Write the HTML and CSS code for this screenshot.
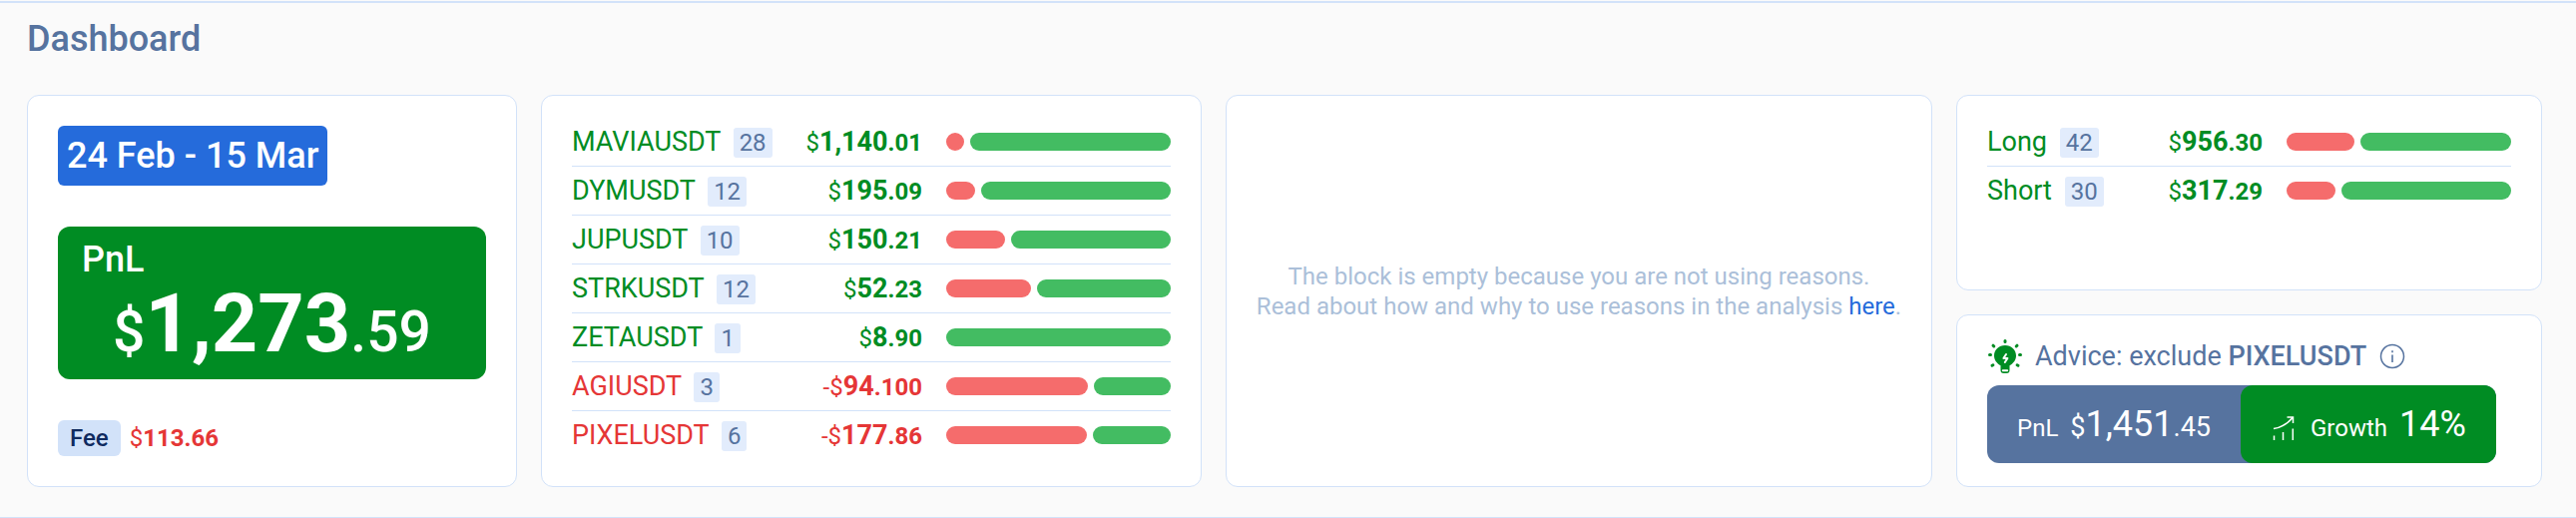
FILE: index.html
```html
<!DOCTYPE html>
<html lang="en">
<head>
    <meta charset="UTF-8">
    <meta name="viewport" content="width=device-width, initial-scale=1.0">
    <title>Dashboard</title>
    <link rel="stylesheet" href="styles.css">
</head>
<body>
<main class="dashboard">
    <h1>Dashboard</h1>
    <div class="cards">
        <section class="card summary">
            <button type="button" class="period">24 Feb - 15 Mar</button>
            <div class="pnl">
                <div class="pnl-label">PnL</div>
                <div class="pnl-value"><span>$</span><strong>1,273</strong><span>.59</span></div>
            </div>
            <div class="fee">
                <span class="fee-label">Fee</span>
                <span class="fee-value">$<b>113.66</b></span>
            </div>
        </section>

        <section class="card list-card">
            <table class="list">
                <tr class="plus">
                    <td class="name">MAVIAUSDT <span class="count">28</span></td>
                    <td class="amount">$<b>1,140</b><b class="cents">.01</b></td>
                    <td class="ratio"><div class="bar"><span class="loss" style="width: 8%"></span><span class="win"></span></div></td>
                </tr>
                <tr class="plus">
                    <td class="name">DYMUSDT <span class="count">12</span></td>
                    <td class="amount">$<b>195</b><b class="cents">.09</b></td>
                    <td class="ratio"><div class="bar"><span class="loss" style="width: 13%"></span><span class="win"></span></div></td>
                </tr>
                <tr class="plus">
                    <td class="name">JUPUSDT <span class="count">10</span></td>
                    <td class="amount">$<b>150</b><b class="cents">.21</b></td>
                    <td class="ratio"><div class="bar"><span class="loss" style="width: 26%"></span><span class="win"></span></div></td>
                </tr>
                <tr class="plus">
                    <td class="name">STRKUSDT <span class="count">12</span></td>
                    <td class="amount">$<b>52</b><b class="cents">.23</b></td>
                    <td class="ratio"><div class="bar"><span class="loss" style="width: 37.8%"></span><span class="win"></span></div></td>
                </tr>
                <tr class="plus">
                    <td class="name">ZETAUSDT <span class="count">1</span></td>
                    <td class="amount">$<b>8</b><b class="cents">.90</b></td>
                    <td class="ratio"><div class="bar"><span class="win"></span></div></td>
                </tr>
                <tr class="minus">
                    <td class="name">AGIUSDT <span class="count">3</span></td>
                    <td class="amount">-$<b>94</b><b class="cents">.100</b></td>
                    <td class="ratio"><div class="bar"><span class="loss" style="width: 63%"></span><span class="win"></span></div></td>
                </tr>
                <tr class="minus">
                    <td class="name">PIXELUSDT <span class="count">6</span></td>
                    <td class="amount">-$<b>177</b><b class="cents">.86</b></td>
                    <td class="ratio"><div class="bar"><span class="loss" style="width: 62.6%"></span><span class="win"></span></div></td>
                </tr>
            </table>
        </section>

        <section class="card empty">
            <p>The block is empty because you are not using reasons.<br>
            Read about how and why to use reasons in the analysis <a href="#">here</a>.</p>
        </section>

        <div class="column">
            <section class="card list-card sides">
                <table class="list">
                    <tr class="plus">
                        <td class="name">Long <span class="count">42</span></td>
                        <td class="amount">$<b>956</b><b class="cents">.30</b></td>
                        <td class="ratio"><div class="bar"><span class="loss" style="width: 30%"></span><span class="win"></span></div></td>
                    </tr>
                    <tr class="plus">
                        <td class="name">Short <span class="count">30</span></td>
                        <td class="amount">$<b>317</b><b class="cents">.29</b></td>
                        <td class="ratio"><div class="bar"><span class="loss" style="width: 21.8%"></span><span class="win"></span></div></td>
                    </tr>
                </table>
            </section>

            <section class="card advice">
                <div class="advice-title">
                    <svg class="bulb" width="36" height="36" viewBox="0 0 36 36" aria-hidden="true">
                        <path stroke="#008c23" stroke-width="3" stroke-linecap="round" d="M18 2.500v1M6 7.200l.8.8M30 7.200l-.8.8M2.500 16.500h1M32.500 16.500h1M5 27.300l.9-.5M31 27.300l-.9-.5"/>
                        <path fill="#008c23" d="M18 7C11.800 7 7 11.600 7 17.500c0 4.300 2.800 7.500 6.500 9.800V32a3 3 0 0 0 3 3h3a3 3 0 0 0 3-3v-4.700C26.200 25 29 21.800 29 17.500 29 11.600 24.200 7 18 7z"/>
                        <path fill="none" stroke="#fff" stroke-width="2" stroke-linecap="round" stroke-linejoin="round" d="M19 16l-2.600 4h4l-2.600 4M15.800 32.300h4.400"/>
                    </svg>
                    <span>Advice: exclude <b>PIXELUSDT</b></span>
                    <button type="button" class="info" aria-label="Info">
                        <svg width="26" height="26" viewBox="0 0 26 26" fill="none" stroke="#56739f">
                            <circle cx="13" cy="13" r="11.500" stroke-width="1.500"/>
                            <path d="M13 11.500v7.500M13 7.300v2" stroke-width="1.600"/>
                        </svg>
                    </button>
                </div>
                <div class="forecast">
                    <div class="forecast-part">
                        <span class="forecast-label">PnL</span>
                        <span class="forecast-value"><small>$</small>1,451<small>.45</small></span>
                    </div>
                    <div class="forecast-part growth">
                        <svg class="growth-icon" width="22" height="26" viewBox="0 0 22 26" fill="none" stroke="#fff" stroke-width="1.500" aria-hidden="true">
                            <path d="M1 13.500C8 12.500 15 8.500 20.300 2.200M14.500 2h6v6M1.500 20.500V25M10.500 17v8M20.300 13.500V25"/>
                        </svg>
                        <span class="forecast-label">Growth</span>
                        <span class="forecast-value">14%</span>
                    </div>
                </div>
            </section>
        </div>
    </div>
</main>
</body>
</html>
```

FILE: styles.css
```css
* {
    box-sizing: border-box;
}
body {
    margin: 0;
    padding-top: 1px;
    background: #fafafa;
    font-family: Roboto, Arial, sans-serif;
    font-size: 24px;
    color: #56739f;
}
button {
    border: none;
    padding: 0;
    background: none;
    font-family: inherit;
    cursor: pointer;
}
.dashboard {
    border-top: 2px solid #d2e2f9;
    border-bottom: 1px solid #d2e2f9;
    padding: 15px 34px 30px 27px;
}
h1 {
    margin: 0 0 35px;
    font-size: 36px;
    line-height: 42px;
    font-weight: 500;
}
.cards {
    display: grid;
    grid-template-columns: 491fr 662fr 708fr 587fr;
    gap: 24px;
}
.card {
    background: #fff;
    border: 1px solid #d2e2f9;
    border-radius: 12px;
    padding: 30px;
}

/* period, pnl, fee */
.summary {
    display: flex;
    flex-direction: column;
    align-items: flex-start;
    justify-content: space-between;
    gap: 41px;
}
.period {
    height: 60px;
    padding: 0 9px;
    border-radius: 6px;
    background: #256bdb;
    color: #fff;
    font-size: 36px;
    font-weight: 500;
}
.pnl {
    width: 100%;
    padding: 13px 24px 10px;
    border-radius: 12px;
    background: #008c23;
    color: #fff;
    font-weight: 500;
}
.pnl-label {
    font-size: 36px;
    line-height: 40px;
}
.pnl-value {
    font-size: 81px;
    line-height: 90px;
    text-align: center;
}
.pnl-value span {
    font-size: 57px;
    line-height: 1;
}
.pnl-value strong {
    font-weight: 700;
}
.fee {
    display: flex;
    align-items: center;
    gap: 9px;
    line-height: 36px;
}
.fee-label {
    padding: 0 12px;
    border-radius: 6px;
    background: #d2e2f9;
    color: #0f2a5f;
    font-weight: 500;
}
.fee-value {
    color: #e53636;
}

/* lists with win / loss bars */
.list-card {
    padding: 22px 30px;
}
.list {
    width: 100%;
    border-collapse: separate;
    border-spacing: 0;
}
.list td {
    height: 49px;
    padding: 0;
    border-bottom: 1px solid #d2e2f9;
    white-space: nowrap;
}
.list tr:last-child td {
    border-bottom-color: transparent;
}
.plus {
    color: #008c23;
}
.minus {
    color: #e53636;
}
.name {
    font-size: 27px;
}
.count {
    display: inline-block;
    margin-left: 6px;
    padding: 0 6px;
    border-radius: 3px;
    background: #e2ecfc;
    color: #56739f;
    font-size: 24px;
    line-height: 30px;
}
.amount {
    text-align: right;
}
.amount b {
    font-size: 27px;
}
.amount .cents {
    font-size: 24px;
}
.ratio {
    width: 249px;
}
.bar {
    display: flex;
    gap: 6px;
    margin-left: 24px;
}
.bar span {
    height: 18px;
    border-radius: 9px;
}
.loss {
    background: #f56c6c;
}
.win {
    flex: 1;
    background: #43bc62;
}

.empty {
    display: flex;
    align-items: center;
    justify-content: center;
    padding: 30px 20px;
    text-align: center;
    color: #abbfd9;
}
.empty p {
    margin: 0;
    line-height: 30px;
}
.empty a {
    color: #256bdb;
    text-decoration: none;
}

.column {
    display: flex;
    flex-direction: column;
    gap: 24px;
}
.sides {
    flex: 1;
}

/* advice */
.advice {
    padding: 23px 30px;
}
.advice-title {
    display: flex;
    align-items: center;
    height: 36px;
    margin-bottom: 11px;
    font-size: 27px;
}
.advice-title b {
    font-weight: 500;
}
.bulb {
    margin-right: 12px;
}
.info {
    display: flex;
    margin-left: 13px;
}
.forecast {
    display: flex;
    width: fit-content;
    border-radius: 12px;
    background: #56739f;
    color: #fff;
}
.forecast-part {
    display: flex;
    align-items: baseline;
    gap: 12px;
    padding: 0 30px;
}
.forecast-label {
    line-height: 1;
}
.forecast-value {
    font-size: 36px;
    line-height: 78px;
}
.forecast-value small {
    font-size: 27px;
    line-height: 1;
}
.growth {
    padding-left: 32px;
    border-radius: 12px;
    background: #008c23;
}
.growth-icon {
    align-self: center;
    margin-top: 8px;
    margin-right: 4px;
}
```
